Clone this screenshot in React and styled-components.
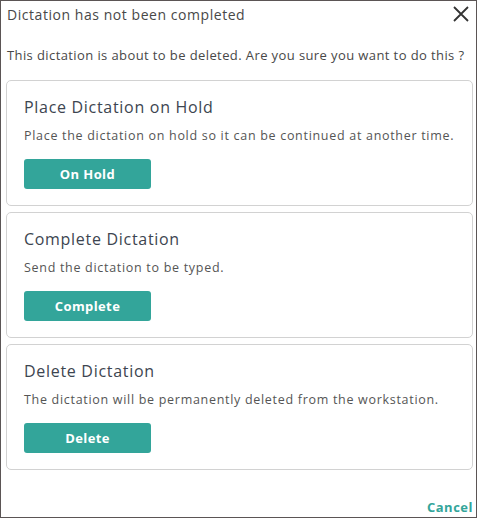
import React from "react";
import styled, { createGlobalStyle } from "styled-components";

const Global = createGlobalStyle`
  html, body { margin: 0; padding: 0; background: #fff; }
  * { box-sizing: border-box; }
  body { font-family: "Open Sans", "Liberation Sans", sans-serif; color: #444; }
`;

const options = [
  {
    title: "Place Dictation on Hold",
    text: "Place the dictation on hold so it can be continued at another time.",
    action: "On Hold",
  },
  {
    title: "Complete Dictation",
    text: "Send the dictation to be typed.",
    action: "Complete",
  },
  {
    title: "Delete Dictation",
    text: "The dictation will be permanently deleted from the workstation.",
    action: "Delete",
  },
];

export default function App() {
  return (
    <>
      <Global />
      <Dialog>
        <Header>
          <Title>Dictation has not been completed</Title>
          <Close aria-label="close">
            <svg width="18" height="18" viewBox="0 0 18 18">
              <path d="M2 2 L16 16 M16 2 L2 16" stroke="#333" strokeWidth="1.8" fill="none" />
            </svg>
          </Close>
        </Header>
        <Message>This dictation is about to be deleted. Are you sure you want to do this ?</Message>
        <Cards>
          {options.map((o) => (
            <Card key={o.action}>
              <CardTitle>{o.title}</CardTitle>
              <CardText>{o.text}</CardText>
              <Action>{o.action}</Action>
            </Card>
          ))}
        </Cards>
        <Footer>
          <Cancel>Cancel</Cancel>
        </Footer>
      </Dialog>
    </>
  );
}

//---------------------------STYLES-------------------------------------------//

const Dialog = styled.div`
  width: 477px;
  height: 518px;
  border: 1px solid #5b5555;
  display: flex;
  flex-direction: column;
  padding: 0 3px 0 5px;
`;

const Header = styled.div`
  display: flex;
  align-items: center;
  justify-content: space-between;
  height: 26px;
  padding-left: 1px;
`;

const Title = styled.div`
  font-size: 14px;
  letter-spacing: 0.55px;
  color: #484848;
`;

const Close = styled.button`
  border: none;
  background: none;
  padding: 0;
  margin-right: 3px;
  display: flex;
  cursor: pointer;
`;

const Message = styled.div`
  font-size: 13px;
  letter-spacing: 0.4px;
  color: #484848;
  margin-top: 19px;
  padding-left: 1px;
`;

const Cards = styled.div`
  display: flex;
  flex-direction: column;
  gap: 6px;
  margin-top: 16px;
`;

const Card = styled.div`
  border: 1px solid #d2d2d2;
  border-radius: 5px;
  height: 126px;
  padding: 16px 17px 0;
`;

const CardTitle = styled.div`
  font-size: 16px;
  letter-spacing: 0.7px;
  color: #3d4550;
  line-height: 20px;
`;

const CardText = styled.div`
  font-size: 12.5px;
  letter-spacing: 0.7px;
  color: #555;
  margin-top: 10px;
`;

const Action = styled.button`
  margin-top: 15px;
  width: 127px;
  height: 30px;
  border: none;
  border-radius: 3px;
  background: #33a59a;
  color: #fff;
  font-family: inherit;
  font-weight: 700;
  font-size: 13px;
  letter-spacing: 0.4px;
  cursor: pointer;
`;

const Footer = styled.div`
  margin-top: auto;
  display: flex;
  justify-content: flex-end;
  padding-bottom: 1px;
`;

const Cancel = styled.button`
  border: none;
  background: none;
  padding: 0;
  font-family: inherit;
  font-weight: 700;
  font-size: 13px;
  letter-spacing: 0.5px;
  color: #33a59a;
  cursor: pointer;
`;
